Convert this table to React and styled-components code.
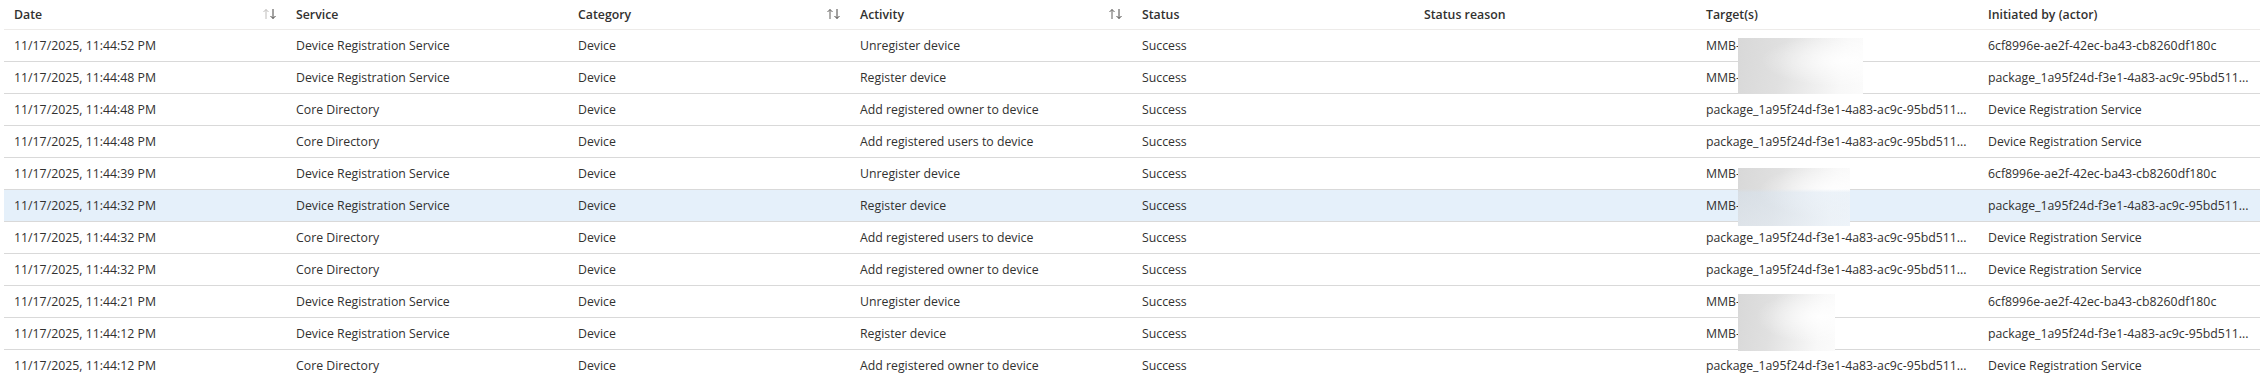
import styled, { createGlobalStyle } from "styled-components";

const GlobalStyle = createGlobalStyle`
  html, body {
    margin: 0;
    padding: 0;
    background: #ffffff;
  }
  body {
    font-family: "Open Sans", "Liberation Sans", sans-serif;
    color: #323130;
  }
`;

const PKG = "package_1a95f24d-f3e1-4a83-ac9c-95bd511...";
const ACTOR_ID = "6cf8996e-ae2f-42ec-ba43-cb8260df180c";
const DRS = "Device Registration Service";
const CORE = "Core Directory";

const columns = [
  { key: "date", label: "Date", sort: "desc" },
  { key: "service", label: "Service" },
  { key: "category", label: "Category", sort: "both" },
  { key: "activity", label: "Activity", sort: "both" },
  { key: "status", label: "Status" },
  { key: "reason", label: "Status reason" },
  { key: "target", label: "Target(s)" },
  { key: "actor", label: "Initiated by (actor)" },
];

const rows = [
  { time: "11:44:52", service: DRS, activity: "Unregister device", target: "MMB-", actor: ACTOR_ID, redact: { top: 8, width: 125, height: 56 } },
  { time: "11:44:48", service: DRS, activity: "Register device", target: "MMB-", actor: PKG },
  { time: "11:44:48", service: CORE, activity: "Add registered owner to device", target: PKG, actor: DRS },
  { time: "11:44:48", service: CORE, activity: "Add registered users to device", target: PKG, actor: DRS },
  { time: "11:44:39", service: DRS, activity: "Unregister device", target: "MMB-", actor: ACTOR_ID, redact: { top: 10, width: 112, height: 58, tint: true } },
  { time: "11:44:32", service: DRS, activity: "Register device", target: "MMB-", actor: PKG, selected: true },
  { time: "11:44:32", service: CORE, activity: "Add registered users to device", target: PKG, actor: DRS },
  { time: "11:44:32", service: CORE, activity: "Add registered owner to device", target: PKG, actor: DRS },
  { time: "11:44:21", service: DRS, activity: "Unregister device", target: "MMB-", actor: ACTOR_ID, redact: { top: 8, width: 97, height: 57 } },
  { time: "11:44:12", service: DRS, activity: "Register device", target: "MMB-", actor: PKG },
  { time: "11:44:12", service: CORE, activity: "Add registered owner to device", target: PKG, actor: DRS },
];

const SortIcon = ({ mode }) => {
  const up = mode === "desc" ? "#bebcba" : "#605e5c";
  const down = "#484644";
  return (
    <svg width="15" height="12" viewBox="0 0 15 12" fill="none">
      <path d="M4 11V1.5M1.5 4L4 1.5L6.5 4" stroke={up} strokeWidth="1" />
      <path d="M11 1v9.5M8.5 8L11 10.5L13.5 8" stroke={down} strokeWidth="1" />
    </svg>
  );
};

const App = () => {
  return (
    <>
      <GlobalStyle />
      <S.Page>
        <S.Table>
          <S.HeaderRow>
            {columns.map((col) => (
              <S.HeadCell key={col.key}>
                <span>{col.label}</span>
                {col.sort && <SortIcon mode={col.sort} />}
              </S.HeadCell>
            ))}
          </S.HeaderRow>
          {rows.map((row, i) => (
            <S.Row key={i} $selected={row.selected}>
              <S.Cell>11/17/2025, {row.time} PM</S.Cell>
              <S.Cell>{row.service}</S.Cell>
              <S.Cell>Device</S.Cell>
              <S.Cell>{row.activity}</S.Cell>
              <S.Cell>Success</S.Cell>
              <S.Cell />
              <S.Cell>
                {row.target}
                {row.redact && (
                  <S.Redact
                    $top={row.redact.top}
                    $width={row.redact.width}
                    $height={row.redact.height}
                    $tint={row.redact.tint}
                  />
                )}
              </S.Cell>
              <S.Cell>{row.actor}</S.Cell>
            </S.Row>
          ))}
        </S.Table>
      </S.Page>
    </>
  );
};
export default App;

const S = {
  Page: styled.div`
    width: 2268px;
    height: 376px;
    overflow: hidden;
    padding-left: 4px;
    box-sizing: border-box;
  `,

  Table: styled.div`
    width: 2256px;
    display: flex;
    flex-direction: column;
    font-size: 12.3px;
  `,

  HeaderRow: styled.div`
    display: grid;
    grid-template-columns: repeat(8, 282px);
    height: 29px;
    border-bottom: 1px solid #edebe9;
  `,

  HeadCell: styled.div`
    display: flex;
    align-items: center;
    justify-content: space-between;
    padding: 0 9px 1px 10px;
    font-weight: 600;
    color: #323130;

    svg {
      flex-shrink: 0;
    }
  `,

  Row: styled.div`
    display: grid;
    grid-template-columns: repeat(8, 282px);
    height: 31px;
    border-bottom: 1px solid #d9d9d9;
    background: ${({ $selected }) => ($selected ? "#e5f0fa" : "transparent")};
  `,

  Cell: styled.div`
    position: relative;
    display: flex;
    align-items: center;
    padding: 0 8px 0 10px;
    min-width: 0;
    overflow: visible;
    white-space: nowrap;
  `,

  Redact: styled.div`
    position: absolute;
    z-index: 1;
    left: 42px;
    top: ${({ $top }) => $top}px;
    width: ${({ $width }) => $width}px;
    height: ${({ $height }) => $height}px;
    background: ${({ $tint }) =>
      $tint
        ? "linear-gradient(to bottom, rgba(255,255,255,0) 36%, rgba(214,228,242,0.45) 42%, rgba(225,236,247,0.5) 100%), "
        : ""}
      radial-gradient(ellipse at 85% 40%, rgba(255, 255, 255, 0.9) 0%, rgba(255, 255, 255, 0) 55%),
      linear-gradient(100deg, #d8d8d8 0%, #e0e0e0 35%, #eeeeee 62%, #f8f8f8 82%, #fbfbfb 100%);
  `,
};
